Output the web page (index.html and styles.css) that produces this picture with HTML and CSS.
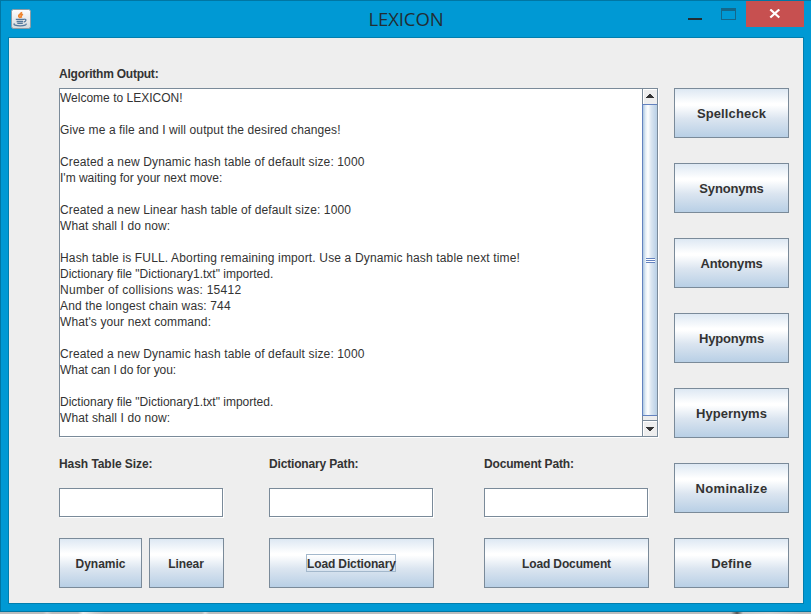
FILE: index.html
```html
<!DOCTYPE html>
<html lang="en">
<head>
<meta charset="utf-8">
<title>LEXICON</title>
<link rel="stylesheet" href="styles.css">
</head>
<body>
<div class="window">
  <header class="titlebar">
    <svg class="app-icon" width="20" height="20" viewBox="0 0 20 20">
      <defs><linearGradient id="tile" x1="0" y1="0" x2="0" y2="1"><stop offset="0" stop-color="#fdfdfd"/><stop offset="1" stop-color="#d5d9dc"/></linearGradient></defs>
      <rect x=".5" y=".5" width="19" height="19" rx="2" fill="url(#tile)" stroke="#8d9ca5"/>
      <path d="M10.400 3c.8 2-3.400 2.600-2.600 4.400.4.800 1.200 1 1.300 1.600M12 5.200c-2.400 1.200-2.200 2.200-1.400 3.600" fill="none" stroke="#ee852f" stroke-width="1.800"/>
      <path d="M4.800 10.300h8.200M5.600 12.500h6.400M6.300 14.300h5.500M13.200 10.300c2.600-.4 2.200 2-.5 2.800M3.600 14.600c-2 1.300 1.600 2.200 5.600 2.200s7-.8 5.600-2.200" fill="none" stroke="#54789b" stroke-width="1.300"/>
    </svg>
    <h1 class="title">LEXICON</h1>
    <div class="controls">
      <span class="minimize"></span>
      <span class="maximize"></span>
      <span class="close"><svg width="12" height="10" viewBox="0 0 12 10"><path d="M1.300.5 10.300 8.500M10.300.5 1.300 8.500" stroke="#fff" stroke-width="2.200"/></svg></span>
    </div>
  </header>
  <main class="content">
    <section class="workspace">
      <div class="label output-label">Algorithm Output:</div>
      <div class="scrollpane">
<pre class="output">Welcome to LEXICON!

<span class="wide-1">Give me a file and I will output the desired changes!</span>

<span class="wide-2">Created a new Dynamic hash table of default size: 1000</span>
I'm waiting for your next move:

<span class="wide-2">Created a new Linear hash table of default size: 1000</span>
<span class="wide-1">What shall I do now:</span>

<span class="wide-3">Hash table is FULL. Aborting remaining import. Use a Dynamic hash table next time!</span>
Dictionary file "Dictionary1.txt" imported.
<span class="wide-4">Number of collisions was: 15412</span>
<span class="wide-2">And the longest chain was: 744</span>
<span class="wide-1">What's your next command:</span>

<span class="wide-2">Created a new Dynamic hash table of default size: 1000</span>
<span class="tight">What can I do for you:</span>

Dictionary file "Dictionary1.txt" imported.
<span class="wide-1">What shall I do now:</span></pre>
        <div class="scrollbar">
          <div class="arrow up"><svg width="8" height="4" viewBox="0 0 8 4" shape-rendering="crispEdges"><path d="M3 0h2v1h1v1h1v1h1v1H0V3h1V2h1V1h1z" fill="#333"/></svg></div>
          <div class="thumb"><div class="grip"><i></i><i></i><i></i></div></div>
          <div class="track-end"></div>
          <div class="arrow down"><svg width="8" height="4" viewBox="0 0 8 4" shape-rendering="crispEdges"><path d="M0 0h8v1H7v1H6v1H5v1H3V3H2V2H1V1H0z" fill="#333"/></svg></div>
        </div>
      </div>
      <div class="forms">
        <div class="field">
          <label class="label size-label" for="size">Hash Table Size:</label>
          <input class="input" id="size" type="text">
          <div class="button-row"><button class="button dynamic">Dynamic</button><button class="button linear">Linear</button></div>
        </div>
        <div class="field">
          <label class="label path-label" for="dict">Dictionary Path:</label>
          <input class="input" id="dict" type="text">
          <button class="button load"><span class="focused">Load Dictionary</span></button>
        </div>
        <div class="field">
          <label class="label path-label" for="doc">Document Path:</label>
          <input class="input" id="doc" type="text">
          <button class="button load">Load Document</button>
        </div>
      </div>
    </section>
    <nav class="actions">
      <button class="button action wide-2">Spellcheck</button>
      <button class="button action narrow">Synonyms</button>
      <button class="button action narrow">Antonyms</button>
      <button class="button action narrow">Hyponyms</button>
      <button class="button action">Hypernyms</button>
      <button class="button action wide-5">Nominalize</button>
      <button class="button action wide-3">Define</button>
    </nav>
  </main>
</div>
</body>
</html>
```
FILE: styles.css
```css
* { box-sizing: border-box; }
body {
  margin: 0;
  width: 811px;
  height: 614px;
  overflow: hidden;
  background: linear-gradient(90deg, #bdbdbd 43px, #d2d2d2 47px, #bdbdbd 52px, #bdbdbd 78px, #eee 83px, #ccc 95px, #bdbdbd 105px, #bdbdbd 202px, #ddd 205px, #bdbdbd 209px, #bdbdbd 731px, #555 737px, #c8c8c8 743px, #d0d0d0 770px, #bdbdbd 800px);
  font-family: "Liberation Sans", Arial, sans-serif;
  color: #333;
}
.window {
  width: 811px;
  height: 612px;
  border: 1px solid #0076a3;
  border-right: 0;
  background: #0099d4;
}
.titlebar {
  display: grid;
  grid-template-columns: 200px 1fr 200px;
  height: 36px;
}
.app-icon { margin: 8px 0 0 10px; }
.title {
  margin: 5px 0 0;
  text-align: center;
  font: 400 18.5px/26px "Open Sans", "Noto Sans", sans-serif;
  letter-spacing: -.1px;
  color: #222d33;
}
.controls {
  display: flex;
  justify-content: flex-end;
  padding-right: 7px;
}
.minimize {
  width: 14px;
  height: 2px;
  margin: 17px 19px 0 0;
  background: #222d33;
}
.maximize {
  width: 15px;
  height: 12px;
  margin: 7px 10px 0 0;
  border: 1px solid #14678a;
  border-top-width: 3px;
}
.close {
  display: flex;
  justify-content: center;
  width: 58px;
  height: 26px;
  padding-top: 8px;
  background: #c75050;
}
.content {
  display: flex;
  gap: 15px;
  width: 796px;
  height: 567px;
  margin-left: 7px;
  padding-left: 50px;
  border: 1px solid #007eae;
  background: #eee;
}
.workspace { width: 600px; }
.label {
  display: block;
  font-size: 12px;
  font-weight: 700;
  line-height: 16px;
  white-space: nowrap;
}
.output-label { margin-top: 28px; letter-spacing: -.23px; }
.size-label { letter-spacing: -.06px; }
.path-label { letter-spacing: -.16px; }
.scrollpane {
  display: flex;
  width: 599px;
  height: 349px;
  margin-top: 6px;
  border: 1px solid #7a8a99;
  background: #fff;
  box-shadow: 1px 1px #fff;
}
.output {
  flex: 1;
  margin: 0;
  padding-top: 1px;
  overflow: hidden;
  font: 12px/16px "Liberation Sans", Arial, sans-serif;
}
.scrollbar {
  display: flex;
  flex-direction: column;
  width: 15px;
  background: #eee;
}
.arrow {
  display: flex;
  align-items: center;
  justify-content: center;
  height: 15px;
  border-left: 1px solid #7a8a99;
  background: #eee;
  box-shadow: inset 1px 1px #fff;
}
.down { height: 16px; border-top: 1px solid #7a8a99; }
.up { padding-bottom: 1px; }
.thumb {
  display: flex;
  align-items: center;
  justify-content: center;
  height: 312px;
  border: 1px solid #6382bf;
  border-right: 0;
  background: linear-gradient(90deg, #b8cfe5 0 1px, #dce8f3 2px, #fff 5px, #dce7f2 8px, #b8cfe5);
}
.grip {
  display: flex;
  flex-direction: column;
  gap: 1px;
  background: #fff;
}
.grip i { width: 9px; height: 1px; background: #6382bf; }
.track-end { height: 4px; border-left: 1px solid #7a8a99; }
.forms {
  display: grid;
  grid-template-columns: 210px 215px 175px;
  margin-top: 19px;
}
.input {
  display: block;
  width: 164px;
  height: 29px;
  margin: 16px 0 0;
  padding: 0 2px;
  border: 1px solid #7a8a99;
  border-radius: 0;
  background: #fff;
  box-shadow: 1px 1px #fff;
}
.button {
  display: block;
  height: 50px;
  margin: 0;
  padding: 1px 0 0;
  border: 1px solid #7a8a99;
  border-radius: 0;
  background: linear-gradient(#dde8f3 0, #fff 30%, #fff 34%, #dbe5f0 62%, #b8cfe5);
  color: #333;
  font: 700 12px/18px "Liberation Sans", Arial, sans-serif;
}
.field > .button, .button-row { margin-top: 21px; }
.button-row { display: flex; gap: 7px; }
.dynamic { width: 83px; }
.linear { width: 75px; padding-right: 1px; letter-spacing: -.05px; }
.load { width: 165px; letter-spacing: -.13px; }
.focused {
  display: block;
  width: 90px;
  height: 18px;
  margin: -1px 0 0 36px;
  line-height: 18px;
  white-space: nowrap;
  border: 1px solid #a3b8cc;
}
.actions {
  display: flex;
  flex-direction: column;
  gap: 25px;
  padding-top: 50px;
}
.action { width: 115px; font-size: 13px; }
.wide-1 { letter-spacing: .11px; }
.wide-2 { letter-spacing: .13px; }
.wide-3 { letter-spacing: .153px; }
.wide-4 { letter-spacing: .28px; }
.wide-5 { letter-spacing: .33px; }
.tight { letter-spacing: -.06px; }
.narrow { letter-spacing: -.18px; }
```
